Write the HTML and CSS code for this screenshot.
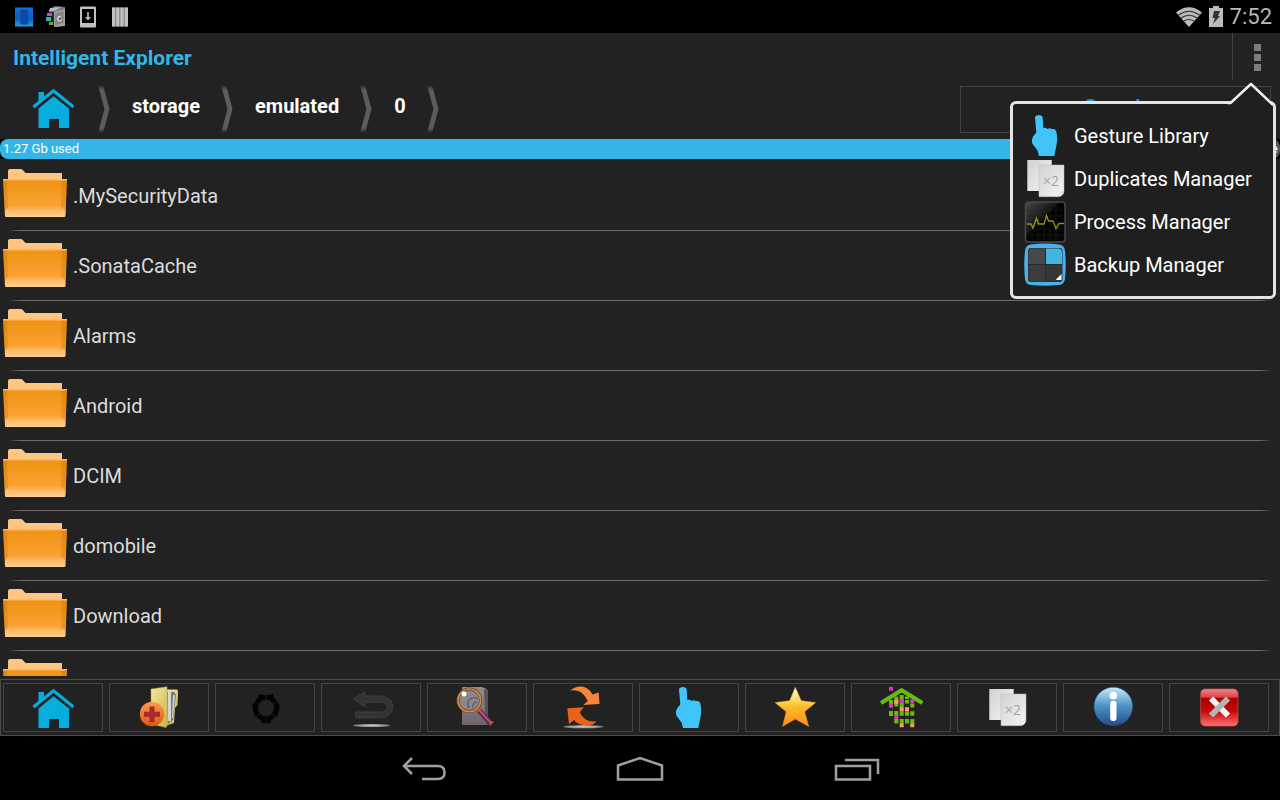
FILE: index.html
```html
<!DOCTYPE html>
<html lang="en">
<head>
<meta charset="utf-8">
<meta name="viewport" content="width=device-width, initial-scale=1">
<title>Intelligent Explorer</title>
<link rel="stylesheet" href="styles.css">
</head>
<body>
<svg class="sprite" aria-hidden="true">
  <defs>
    <linearGradient id="g-folder" x2="0" y2="1"><stop offset="0" stop-color="#ee9210"/><stop offset=".7" stop-color="#fba232"/><stop offset=".85" stop-color="#ffbd6e"/><stop offset="1" stop-color="#ffcd90"/></linearGradient>
    <linearGradient id="g-star" x2="0" y2="1"><stop offset="0" stop-color="#fffbe0"/><stop offset=".35" stop-color="#ffd75a"/><stop offset=".5" stop-color="#ffbb28"/><stop offset="1" stop-color="#ff8a1e"/></linearGradient>
    <linearGradient id="g-info" x2="0" y2="1"><stop offset="0" stop-color="#c4eefa"/><stop offset=".5" stop-color="#4a90c4"/><stop offset="1" stop-color="#264a8c"/></linearGradient>
    <linearGradient id="g-close" x2="0" y2="1"><stop offset="0" stop-color="#e88"/><stop offset=".22" stop-color="#d44"/><stop offset=".25" stop-color="#a80000"/><stop offset=".6" stop-color="#c60808"/><stop offset="1" stop-color="#ff7070"/></linearGradient>
    <linearGradient id="g-paper" x2="1" y2="1"><stop offset="0" stop-color="#d2d2d4"/><stop offset="1" stop-color="#f4f4f4"/></linearGradient>
    <linearGradient id="g-yellow" x2="1" y2="1"><stop offset="0" stop-color="#f4e9a0"/><stop offset="1" stop-color="#c9b244"/></linearGradient>
    <linearGradient id="g-orange" x2="0" y2="1"><stop offset="0" stop-color="#ff9a4c"/><stop offset="1" stop-color="#dc5818"/></linearGradient>
    <linearGradient id="g-drive" x2="0" y2="1"><stop offset="0" stop-color="#8f8b8f"/><stop offset="1" stop-color="#6c666c"/></linearGradient>
    <linearGradient id="g-chev" x2="0" y2="1"><stop offset="0" stop-color="#5c5c5c" stop-opacity="0"/><stop offset=".1" stop-color="#5c5c5c"/><stop offset=".9" stop-color="#5c5c5c"/><stop offset="1" stop-color="#5c5c5c" stop-opacity="0"/></linearGradient>
    <linearGradient id="g-screen" x2="1" y2="1"><stop offset="0" stop-color="#4c4c4c"/><stop offset=".42" stop-color="#141414"/><stop offset=".45" stop-color="#020202"/><stop offset="1" stop-color="#080808"/></linearGradient>
    <linearGradient id="g-app" x2="0" y2="1"><stop offset="0" stop-color="#1270d4"/><stop offset=".6" stop-color="#0b5cc4"/><stop offset="1" stop-color="#25a0dc"/></linearGradient>
    <radialGradient id="g-shadow"><stop offset="0" stop-color="#c8c8c8"/><stop offset=".7" stop-color="#9a9a9a"/><stop offset="1" stop-color="#666"/></radialGradient>
  </defs>
  <symbol id="i-home" viewBox="0 0 44 44">
    <path fill="#07addc" d="M7.500 6h5.500v4.500l-5.500 5z"/>
    <path fill="none" stroke="#07addc" stroke-width="3.200" d="M2.500 21 22.500 4.800 42.500 21"/>
    <path fill="#07addc" d="M7.500 22.500 22.500 10.300 38 22.500V42H28v-9H18v9H7.500z"/>
  </symbol>
  <symbol id="i-chevron" viewBox="0 0 12 48"><path fill="url(#g-chev)" d="M0 0H5L11.500 24 5 48H0L6.500 24z"/></symbol>
  <symbol id="i-folder" viewBox="0 0 64 50">
    <path fill="#ffc682" d="M5 3Q5 1 7 1H17.500Q19 1 20 2.300L22.500 5H59V13H5z"/>
    <path fill="url(#g-folder)" d="M0 11H64L62.500 48Q62.500 49 61 49H3Q2 49 2 48z"/>
    <path fill="#a45c00" opacity=".2" d="M0 11H4L5 40 2 42zM64 11H59L58 40 62.500 42z"/>
    <path fill="#ffb868" d="M0 11H64V12.500H0z"/>
  </symbol>
  <symbol id="i-hand" viewBox="0 0 44 44">
    <path fill="#40c4fa" d="M12 3.500C12 0 19.700 0 19.700 3.500L20.300 14C22 13.300 23.500 14 24.500 15 26 14 28 14 29 15.200 31.500 14.200 33.500 16 33.700 19.500 34.300 23 34.300 27 33.500 31L31.300 42H16L14.500 36.500 9.300 29.500Q8 26 10 22.500L13.300 18.500z"/>
  </symbol>
  <symbol id="i-pages" viewBox="0 0 44 44">
    <path fill="url(#g-paper)" d="M4.300 3H28.700V34H4.300z"/>
    <path fill="url(#g-paper)" stroke="#bbb" stroke-width=".5" d="M16 8H41V34.500Q40 39.500 35 39.700H16z"/>
    <path fill="#fff" stroke="#aaa" stroke-width=".5" d="M35 39.500Q36.500 35 40.800 34.500 40 39 35 39.500z"/>
  </symbol>
  <symbol id="i-newfolder" viewBox="0 0 44 44">
    <path fill="url(#g-yellow)" d="M28 3.500H40Q41.500 4 41 7L40.500 19 38 22 37 37 28 40z"/>
    <path fill="#777" d="M30 6H37L39 9 36 34 30 39z"/><path fill="#d6d6d6" d="M31 6H34V35H31zM36 9H38L36 32H35z"/>
    <path fill="url(#g-yellow)" stroke="#b8a13a" stroke-width=".5" d="M14 3 30 .7 31 38 29 41.500 14 38z"/>
    <circle cx="15" cy="28" r="12.200" fill="url(#g-orange)"/>
    <path fill="#a72a2a" d="M12.500 20.500h5v5.300h5.500v5h-5.500v5.500h-5v-5.500H7v-5h5.500z"/>
  </symbol>
  <symbol id="i-ring" viewBox="0 0 44 44">
    <circle cx="23" cy="22" r="10.500" fill="none" stroke="#030303" stroke-width="5"/>
    <g fill="#030303"><path d="M16 8 21 9 20 15 14 15zM30 8 25 9 26 15 32 15zM9 19l5-1 4 9-6 4zM37 19l-5-1-4 9 6 4zM18 30h10v7h-10z"/></g>
    <circle cx="23" cy="22" r="8" fill="#222"/>
    <path stroke="#222" stroke-width=".7" d="M23 7V15M11 15 16 18M35 15 30 18M12 32 17 28M34 32 29 28M23 29V38"/>
  </symbol>
  <symbol id="i-back" viewBox="0 0 44 44">
    <path fill="#333" stroke="#484848" stroke-width=".7" d="M4.300 13 16 5.700V10H31C48 10 48 31.700 31 31.700H6.700V26H31C40.500 26 40.500 16.300 31 16.300H16V20.700z"/>
    <ellipse cx="22.700" cy="39.500" rx="18.700" ry="1.600" fill="url(#g-shadow)"/>
  </symbol>
  <symbol id="i-search" viewBox="0 0 44 44">
    <path fill="url(#g-drive)" d="M7 1H26Q33 2 33 7V39H7z"/>
    <path fill="#565256" d="M29 3Q33 4 33 7V39H31z"/>
    <circle cx="14.300" cy="14.300" r="11.300" fill="#8b878b" stroke="#6b4028" stroke-width="3"/>
    <circle cx="14.300" cy="14.300" r="11.300" fill="none" stroke="#cf8848" stroke-width="1.700"/>
    <path fill="none" stroke="#5b596c" stroke-width="1.300" d="M14 22C10 15 17 9 23 13M18 22Q17 16 22 16"/>
    <circle cx="9" cy="8" r="2.500" fill="#fff"/>
    <path stroke="#6b2345" stroke-width="5" d="M23.500 24 36.500 38"/><path stroke="#b1528a" stroke-width="2" d="M24 24 36 37"/>
    <path stroke="#a8602c" stroke-width="2" d="M22 25.500 26 22M34.500 39 38 35.500"/>
  </symbol>
  <symbol id="i-sync" viewBox="0 0 44 44">
    <ellipse cx="22.300" cy="40.700" rx="20.300" ry="1.800" fill="url(#g-shadow)"/>
    <path fill="#f98336" d="M9 4.700C15-1 26-2 31.500 8.500L37.700 6.500 38.500 18 22.300 19 26.700 15C23 7 17 3 9 4.700z"/>
    <path fill="#e8641e" d="M6.300 22.300 23 21.300 18.700 26.300C22 33 28 37 35.700 35 33 39 29 39.700 24 39.200 18 38.500 15 37 13 34L8 38.300z"/>
  </symbol>
  <symbol id="i-star" viewBox="0 0 44 44">
    <path fill="url(#g-star)" stroke="#a66a10" stroke-width=".4" stroke-linejoin="round" d="M22.300 1 28.300 14.600 43 16.500 31.800 25.700 36 40.700 22.300 33.300 9.300 40.700 13 25.700 1.700 16.500 16.500 14.600z"/>
  </symbol>
  <symbol id="i-tree" viewBox="0 0 44 44">
    <path fill="#68ba0c" d="M10 14h4v4h-4zM10 25h4v5h-4zM15.300 10.500h4v7h-4zM15.300 17.500h4v3h-4zM15.300 25h4v5h-4zM15.300 33h4v4.500h-4zM20.700 9h4v12.500h-4zM20.700 25.300h4v4.500h-4zM20.700 33h4v4.500h-4zM26 10.500h4v2.500h-4zM26 14h4v3.500h-4zM26 25.300h4v4.500h-4zM26 33h4v4.500h-4zM31.300 17.500h4v4h-4zM31.300 25.300h4v4.500h-4zM31.300 33h4v4.500h-4z"/>
    <path fill="#d836bc" d="M10 .7h4v4h-4zM10 17.700h4v4h-4zM20.700 13.300h4v4h-4zM31.300 13.300h4v4h-4zM15.300 29.500h4v3.500h-4z"/>
    <path fill="#ff9c66" d="M15.300 13.700h4v4h-4zM20.700 21.300h4v4h-4zM26 21.300h4v4h-4zM20.700 37.300h4v4h-4zM31.300 37.300h4v4h-4z"/>
    <path fill="none" stroke="#68ba0c" stroke-width="4" d="M2 17 22.600 4.200 43.500 17"/>
  </symbol>
  <symbol id="i-info" viewBox="0 0 44 44">
    <circle cx="22.300" cy="20.500" r="19.300" fill="url(#g-info)" stroke="#20508a" stroke-width=".5"/>
    <circle cx="22.300" cy="9.700" r="3.700" fill="#fff"/><rect x="19.200" y="14.700" width="6.300" height="20.300" rx="3" fill="#fff"/>
  </symbol>
  <symbol id="i-close" viewBox="0 0 44 44">
    <rect x="3.700" y="3" width="37.300" height="37" rx="4.500" fill="url(#g-close)" stroke="#d05050" stroke-width=".7"/>
    <path stroke="#f4f4f4" stroke-width="6" d="M14 12.500 31 29.500"/><path stroke="#b4b4b4" stroke-width="6" d="M31 12.500 14 29.500"/>
  </symbol>
  <symbol id="i-process" viewBox="0 0 44 44">
    <rect x="2.500" y="2" width="39.500" height="40" rx="3" fill="url(#g-screen)" stroke="#484848" stroke-width="1.500"/>
    <path stroke="#222" stroke-width=".5" d="M9 4V40M15 4V40M21 4V40M27 4V40M33 4V40M4 10H40M4 16H40M4 29H40M4 35H40"/>
    <path fill="none" stroke="#98940e" stroke-width="1.300" d="M4 24H8L10 28 13.500 18 15.500 24H21L23.500 15.500 25.500 21H30L33 28.500 36 23.500H41"/>
  </symbol>
  <symbol id="i-backup" viewBox="0 0 44 44">
    <path fill="#4ab0ec" d="M8 1.500Q22-.5 36 1.500 41.500 2 42 8 43.500 22 42 36 41 41.500 36 42 22 43.500 8 42 2.500 41.500 2 36 .5 22 2 8 2.500 2 8 1.500z"/>
    <rect x="5" y="5" width="34.500" height="34" rx="3" fill="#262b30"/>
    <path fill="#484848" d="M5.500 9Q5.500 5.500 9 5.500H22V21H5.500z"/><path fill="#43b4dc" d="M23 5.500H36Q39 6 39 9V21H23z"/><path fill="#3c3c3c" d="M5.500 22H22V38.500H9Q5.500 38 5.500 35z"/><path fill="#363636" d="M23 22H39V35Q39 38 36 38.500H23z"/>
    <path fill="#fff" d="M38.500 31V37H32.500z"/>
  </symbol>
</svg>

<header class="status">
  <div class="status-group">
    <svg class="status-icon" viewBox="0 0 20 22"><rect x="1" y="1.500" width="18" height="19" fill="url(#g-app)"/><rect x="6" y="3.500" width="8.500" height="15" rx="3" fill="#0a49a4" stroke="#1560b8" stroke-width=".7"/></svg>
    <svg class="status-icon" viewBox="0 0 20 22"><path fill="#777" d="M3 4 9 0 19 1 19 18 12 21 5 18z"/><path fill="#bcbcbc" d="M4 2 16 1 8 5H3z"/><path fill="#222" d="M4 6H8V19L4 17z"/><path fill="#a4a4a4" d="M8 6 19 3V20L8 21z"/><path fill="#868686" d="M9 7.500 17.500 5V17L9 19.500z"/><path fill="#d448bc" d="M1 7h5v3H1z"/><path fill="#2bb4b0" d="M0 11h5v4H0z"/><path fill="#78a42c" d="M3 16h4v3H3z"/><path fill="none" stroke="#ddd" stroke-width="1.300" d="M15 10.500Q11 10 12 14 14 16 15.500 13"/><path fill="none" stroke="#333" d="M14 12v2"/></svg>
    <svg class="status-icon" viewBox="0 0 20 22"><path fill="#c0c0c0" fill-rule="evenodd" d="M3 .5H17Q18 .5 18 2V20Q18 21.500 17 21.500H3Q2 21.500 2 20V2Q2 .5 3 .5zM4 3V17H16V3z"/><path fill="#c0c0c0" d="M9.200 6h1.600v5H13l-3 3.500L7 11h2.200z"/></svg>
    <svg class="status-icon" viewBox="0 0 20 22"><path fill="#888" d="M2 1.500H18V20.500H2z"/><path fill="#c0c0c0" d="M2 1.500h3v19H2zM6.200 1.500h3v19h-3zM10.500 1.500h3v19h-3zM14.800 1.500H18v19h-3.200z"/></svg>
  </div>
  <div class="status-group status-right">
    <svg class="wifi" viewBox="0 0 26 20"><path fill="#bcbcbc" d="M0 5.500Q13-5 26 5.500L13 20z"/><path fill="none" stroke="#000" stroke-opacity=".75" stroke-width="1.200" d="M2.500 8Q13 .5 23.500 8M5 11Q13 5.500 21 11M8 14Q13 11 18 14"/></svg>
    <svg class="battery" viewBox="0 0 14 22"><path fill="#bcbcbc" d="M4 0H10V2H14V21H0V2H4z"/><path fill="#333" d="M5 5H11L9 10H11L4 18 6 12H3.500z"/></svg>
    <time>7:52</time>
  </div>
</header>

<main class="app">
  <div class="titlebar">
    <h1>Intelligent Explorer</h1>
    <button class="more" aria-label="More options" aria-expanded="true"><i></i><i></i><i></i></button>
  </div>
  <div class="pathbar">
    <nav class="crumbs" aria-label="Path">
      <a class="crumb-home" href="#home" aria-label="Home"><svg class="icon"><use href="#i-home"/></svg></a>
      <svg class="chevron"><use href="#i-chevron"/></svg>
      <a class="crumb" href="#storage">storage</a>
      <svg class="chevron"><use href="#i-chevron"/></svg>
      <a class="crumb" href="#emulated">emulated</a>
      <svg class="chevron"><use href="#i-chevron"/></svg>
      <a class="crumb" href="#0">0</a>
      <svg class="chevron"><use href="#i-chevron"/></svg>
    </nav>
    <button class="search">Search</button>
  </div>
  <div class="usage"><span class="used">1.27 Gb used</span><span class="free">free</span></div>

  <ul class="files">
    <li><a href="#f1"><svg class="folder"><use href="#i-folder"/></svg><span>.MySecurityData</span></a></li>
    <li><a href="#f2"><svg class="folder"><use href="#i-folder"/></svg><span>.SonataCache</span></a></li>
    <li><a href="#f3"><svg class="folder"><use href="#i-folder"/></svg><span>Alarms</span></a></li>
    <li><a href="#f4"><svg class="folder"><use href="#i-folder"/></svg><span>Android</span></a></li>
    <li><a href="#f5"><svg class="folder"><use href="#i-folder"/></svg><span>DCIM</span></a></li>
    <li><a href="#f6"><svg class="folder"><use href="#i-folder"/></svg><span>domobile</span></a></li>
    <li><a href="#f7"><svg class="folder"><use href="#i-folder"/></svg><span>Download</span></a></li>
    <li><a href="#f8" aria-label="Folder"><svg class="folder"><use href="#i-folder"/></svg></a></li>
  </ul>

  <div class="toolbar" role="toolbar">
    <button aria-label="Home"><svg class="icon"><use href="#i-home"/></svg></button>
    <button aria-label="New folder"><svg class="icon"><use href="#i-newfolder"/></svg></button>
    <button aria-label="Select"><svg class="icon"><use href="#i-ring"/></svg></button>
    <button aria-label="Back"><svg class="icon"><use href="#i-back"/></svg></button>
    <button aria-label="Find"><svg class="icon"><use href="#i-search"/></svg></button>
    <button aria-label="Refresh"><svg class="icon"><use href="#i-sync"/></svg></button>
    <button aria-label="Gestures"><svg class="icon"><use href="#i-hand"/></svg></button>
    <button aria-label="Favorites"><svg class="icon"><use href="#i-star"/></svg></button>
    <button aria-label="Storage map"><svg class="icon"><use href="#i-tree"/></svg></button>
    <button aria-label="Duplicates"><svg class="icon"><use href="#i-pages"/><text class="times" x="20" y="29">×2</text></svg></button>
    <button aria-label="Info"><svg class="icon"><use href="#i-info"/></svg></button>
    <button aria-label="Exit"><svg class="icon"><use href="#i-close"/></svg></button>
  </div>

  <div class="popup">
    <svg class="pointer" viewBox="0 0 46 24"><path fill="#1f1f1f" d="M1 24 3 21 24 2 44 21 46 24z"/><path fill="none" stroke="#f0f0f0" stroke-width="2.500" stroke-linejoin="round" d="M0 21H3.500L24 2 46 23"/></svg>
    <ul>
      <li><button><svg class="icon"><use href="#i-hand"/></svg>Gesture Library</button></li>
      <li><button><svg class="icon"><use href="#i-pages"/><text class="times" x="20" y="29">×2</text></svg>Duplicates Manager</button></li>
      <li><button><svg class="icon"><use href="#i-process"/></svg>Process Manager</button></li>
      <li><button><svg class="icon"><use href="#i-backup"/></svg>Backup Manager</button></li>
    </ul>
  </div>
</main>

<nav class="system" aria-label="System">
  <button aria-label="Back"><svg viewBox="0 0 48 28"><path d="M12 2 4 10 12 18M4 10H38Q44.500 10 44.500 16.500T38 23H22"/></svg></button>
  <button aria-label="Home"><svg viewBox="0 0 48 28"><path d="M2 9.500 24 2 46 9.500V23.500H2z"/></svg></button>
  <button aria-label="Recent apps"><svg viewBox="0 0 48 28"><path d="M4 10H38V23.500H4zM13 4H46V18"/></svg></button>
</nav>
</body>
</html>
```
FILE: styles.css
```css
* { box-sizing: border-box; }
body {
  margin: 0;
  height: 100vh;
  display: flex;
  flex-direction: column;
  overflow: hidden;
  background: #000;
  color: #fff;
  font-family: Roboto, "Noto Sans", sans-serif;
  font-size: 20px;
}
button {
  margin: 0;
  padding: 0;
  border: 0;
  background: none;
  color: inherit;
  font: inherit;
}
a { color: inherit; text-decoration: none; }
ul { list-style: none; margin: 0; padding: 0; }
svg { display: block; flex: none; }
.sprite { position: absolute; width: 0; height: 0; }
.icon { width: 44px; height: 44px; }
.times { font-family: "Open Sans", sans-serif; font-size: 14px; fill: #a6a6a6; }

.status {
  flex: none;
  height: 33px;
  padding: 0 8px 0 14px;
  display: flex;
  justify-content: space-between;
  align-items: center;
}
.status-group { display: flex; align-items: center; gap: 12px; }
.status-icon { width: 20px; height: 22px; }
.status-right { gap: 7px; color: #b8b8b8; font-size: 22px; }
.wifi { width: 26px; height: 20px; }
.battery { width: 14px; height: 22px; }

.app {
  position: relative;
  flex: 1;
  min-height: 0;
  display: flex;
  flex-direction: column;
  background: #222;
}
.titlebar {
  flex: none;
  height: 47px;
  display: flex;
  justify-content: space-between;
  align-items: center;
  padding-left: 13px;
}
h1 { margin: 0; padding-top: 2px; font-size: 21px; line-height: 24px; color: #33b5e5; }
.more {
  width: 48px;
  align-self: stretch;
  border-left: 1px solid #3c4644;
  padding: 2px 0 0 2px;
  display: flex;
  flex-direction: column;
  align-items: center;
  justify-content: center;
  gap: 3px;
}
.more i { width: 7px; height: 7px; background: #7c7c7c; }

.pathbar {
  flex: none;
  height: 59px;
  display: flex;
  justify-content: space-between;
  align-items: flex-start;
  padding: 5px 9px 0 31px;
}
.crumbs { display: flex; align-items: center; }
.crumb-home { margin: 0 23px 2px 0; }
.chevron { width: 12px; height: 48px; }
.crumb { padding: 0 21px 7px 22px; font-weight: 700; }
.search {
  width: 311px;
  height: 47px;
  margin-top: 1px;
  padding-bottom: 5px;
  border: 1px solid #3c4644;
  color: #1a8ce0;
  font-weight: 700;
}

.usage {
  flex: none;
  height: 20px;
  display: flex;
  background: #000;
  font-size: 13px;
  line-height: 19px;
}
.used { flex: 1; padding-left: 3px; background: #33b5e8; border-radius: 8px 0 0 8px; }
.free { padding: 0 2px; background: #555; border-radius: 0 8px 8px 0; }

.files { flex: 1; min-height: 0; overflow: hidden; margin: 2px 0 3px; }
.files li {
  height: 70px;
  background: linear-gradient(90deg, transparent 8px, #6c6c6c 20px, #6c6c6c calc(100% - 20px), transparent calc(100% - 8px)) bottom / 100% 1px no-repeat;
}
.files a {
  height: 70px;
  display: flex;
  align-items: flex-start;
  gap: 6px;
  padding: 7px 3px 0;
  color: #dcdcdc;
}
.files span { line-height: 56px; }
.folder { width: 64px; height: 50px; }

.toolbar {
  flex: none;
  display: grid;
  grid-template-columns: repeat(12, 1fr);
  gap: 6px;
  padding: 3px 10px 3px 2px;
  border: 1px solid #4c4c4c;
}
.toolbar button {
  height: 49px;
  border: 1px solid #3c4644;
  display: flex;
  align-items: center;
  justify-content: center;
}

.popup {
  position: absolute;
  top: 68px;
  right: 4px;
  width: 266px;
  padding: 10px;
  background: #1f1f1f;
  border: 3px solid #e4e4e4;
  border-radius: 6px;
}
.pointer { position: absolute; top: -22px; right: 0; width: 46px; height: 24px; }
.popup button { height: 43px; display: flex; align-items: center; gap: 7px; }

.system {
  flex: none;
  height: 64px;
  padding-top: 4px;
  display: flex;
  justify-content: center;
  align-items: center;
}
.system button { width: 216px; display: flex; justify-content: center; }
.system svg { width: 48px; height: 28px; fill: none; stroke: #a0a0a0; stroke-width: 2.5; }
```
